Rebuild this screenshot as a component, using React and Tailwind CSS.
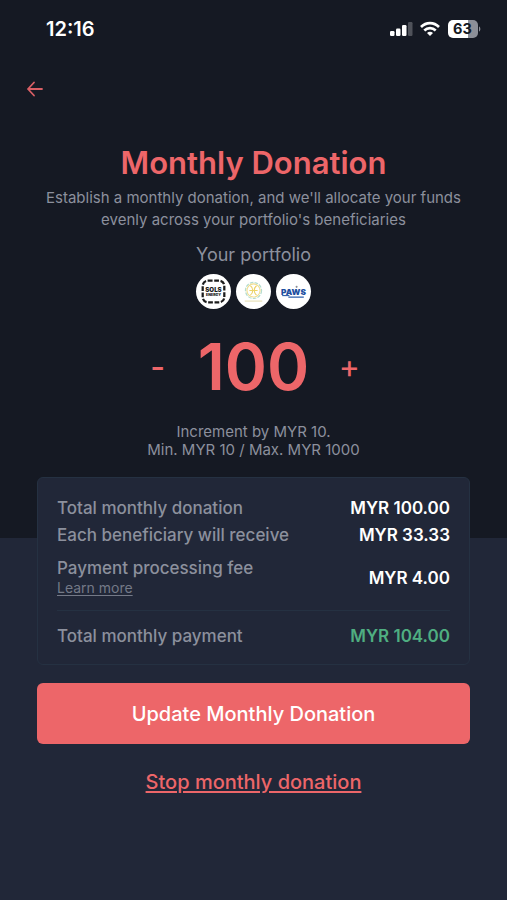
import { useState } from 'react'

const STEP = 10
const MIN = 10
const MAX = 1000
const FEE = 4

const beneficiaries = [
  { id: 'sols', name: 'SOLS Energy', Logo: SolsLogo },
  { id: 'sun', name: 'Sun Foundation', Logo: SunLogo },
  { id: 'paws', name: 'PAWS', Logo: PawsLogo },
]

const money = (value) => `MYR ${value.toFixed(2)}`

function SolsLogo() {
  return (
    <svg viewBox="0 0 34 34" className="size-full" aria-hidden="true">
      <rect x="6.5" y="6.5" width="21" height="21" rx="5" fill="none" stroke="#1c1c1c" strokeWidth="2.2" strokeDasharray="4.6 1.6" />
      <text x="17" y="17.5" textAnchor="middle" fontFamily="Inter, sans-serif" fontWeight="900" fontSize="6" fill="#1c1c1c">SOLS</text>
      <text x="17" y="21.5" textAnchor="middle" fontFamily="Inter, sans-serif" fontWeight="900" fontSize="3.5" fill="#1c1c1c">ENERGY</text>
    </svg>
  )
}

function SunLogo() {
  return (
    <svg viewBox="0 0 34 34" className="size-full" fill="none" aria-hidden="true">
      <circle cx="17" cy="16" r="7.8" stroke="#b4dccf" strokeWidth="1.2" strokeDasharray="3.5 1.2" />
      <circle cx="17" cy="16" r="6.4" stroke="#f0dc8c" strokeWidth="1" />
      <path d="M14 11.5c3 2 3 7 0 9M20 11.5c-3 2-3 7 0 9M13 16h8" stroke="#edd368" strokeWidth="1.1" />
      <path d="M8.5 26.3h17" stroke="#e3dcae" strokeWidth="1" />
    </svg>
  )
}

function PawsLogo() {
  return (
    <svg viewBox="0 0 34 34" className="size-full" aria-hidden="true">
      <text x="17" y="20" textAnchor="middle" fontFamily="Inter, sans-serif" fontWeight="900" fontSize="8" fill="#1e4f9f">PAWS</text>
      <circle cx="20" cy="12.5" r="1" fill="#8a8f98" />
      <path d="M6 21h7" stroke="#1e4f9f" strokeWidth="1" />
      <path d="M12 22.5h15" stroke="#5f86c0" strokeWidth="1.6" />
    </svg>
  )
}

function StatusBar() {
  return (
    <div className="flex items-center justify-between pl-[46px] pr-[26px] pt-[17px] text-white">
      <span className="text-xl leading-6 font-semibold">12:16</span>
      <div className="flex items-center gap-[7px]">
        <svg width="23" height="16" viewBox="0 0 23 16" fill="currentColor" aria-hidden="true">
          <rect x="0" y="10" width="4.5" height="5" rx="1.2" />
          <rect x="6" y="7.5" width="4.5" height="7.5" rx="1.2" />
          <rect x="12" y="4" width="4.5" height="11" rx="1.2" />
          <rect x="18" y="1" width="4.5" height="14" rx="1.2" opacity="0.25" />
        </svg>
        <svg width="20" height="16" viewBox="0 0 20 16" fill="none" stroke="currentColor" strokeWidth="2.6" aria-hidden="true">
          <path d="M1 6C6 .8 14 .8 19 6" />
          <path d="M4.3 9.5c3.2-3.2 8.2-3.2 11.4 0" />
          <path d="M10 15l-3-3.1c1.8-1.6 4.2-1.6 6 0z" fill="currentColor" stroke="none" />
        </svg>
        <svg width="34" height="20" viewBox="0 0 34 20" aria-label="Battery 63%">
          <path d="M6 1h15v18H6a5 5 0 0 1-5-5V6a5 5 0 0 1 5-5z" fill="#fff" />
          <path d="M21 1h5a5 5 0 0 1 5 5v8a5 5 0 0 1-5 5h-5z" fill="#8c8f98" />
          <path d="M32 7.5c1.8.6 1.8 4.400 0 5z" fill="#8c8f98" />
          <text x="15.5" y="15.4" textAnchor="middle" fontFamily="Inter, sans-serif" fontWeight="700" fontSize="14.5" fill="#151923">63</text>
        </svg>
      </div>
    </div>
  )
}

function Row({ label, value, valueClass = 'text-white', children }) {
  return (
    <div className="flex items-center justify-between">
      <dt className="font-medium text-[#8c909d]">
        {label}
        {children}
      </dt>
      <dd className={`font-semibold ${valueClass}`}>{value}</dd>
    </div>
  )
}

export default function App() {
  const [amount, setAmount] = useState(100)

  const change = (delta) => setAmount((a) => Math.min(MAX, Math.max(MIN, a + delta)))

  return (
    <div className="min-h-screen bg-[#212738] font-['Inter',sans-serif]">
      <header className="bg-[#151923] pb-[79px] text-center text-[#8c909d]">
        <StatusBar />

        <div className="flex px-6 pt-[37px]">
          <button type="button" aria-label="Back" className="p-0.5 text-[#d95f65]">
            <svg width="18" height="18" viewBox="0 0 18 18" fill="none" stroke="currentColor" strokeWidth="1.8" strokeLinecap="round" strokeLinejoin="round" aria-hidden="true">
              <path d="M16 9H2M8 2.500L2 9l6 6.500" />
            </svg>
          </button>
        </div>

        <h1 className="mt-[43px] text-[31px] leading-10 font-semibold text-[#ed6669]">Monthly Donation</h1>
        <p className="mx-auto mt-1 max-w-[420px] text-[15px] leading-[22px]">
          Establish a monthly donation, and we'll allocate your funds evenly across your portfolio's beneficiaries
        </p>

        <h2 className="mt-3 text-lg leading-6">Your portfolio</h2>
        <ul className="mt-[7px] flex justify-center gap-[5px]">
          {beneficiaries.map(({ id, name, Logo }) => (
            <li key={id} title={name} className="size-[35px] rounded-full bg-white">
              <Logo />
            </li>
          ))}
        </ul>

        <div className="mt-[26px] flex items-center justify-center gap-7 text-[#ed6669]">
          <button type="button" aria-label="Decrease" onClick={() => change(-STEP)} className="w-6 text-[32px] leading-8 font-medium">-</button>
          <output className="text-[64px] leading-[64px] font-semibold">{amount}</output>
          <button type="button" aria-label="Increase" onClick={() => change(STEP)} className="w-6 text-[32px] leading-8">+</button>
        </div>

        <p className="mt-6 text-[15px] leading-[18px]">
          Increment by MYR {STEP}.
          <br />
          Min. MYR {MIN} / Max. MYR {MAX}
        </p>
      </header>

      <main className="-mt-[61px] px-[37px] pb-10">
        <dl className="rounded-md border border-[#253142] bg-[#212738] px-[19px] pt-[17px] pb-[14px] text-[17px] leading-[27px]">
          <Row label="Total monthly donation" value={money(amount)} />
          <Row label="Each beneficiary will receive" value={money(Math.floor((amount * 100) / beneficiaries.length) / 100)} />
          <div className="mt-[9px] border-b border-[#253142] pb-3 leading-5">
            <Row label="Payment processing fee" value={money(FEE)}>
              <a href="#fees" className="block text-sm leading-5 font-normal text-[#747987] underline underline-offset-2">Learn more</a>
            </Row>
          </div>
          <div className="pt-3">
            <Row label="Total monthly payment" value={money(amount + FEE)} valueClass="text-[#4fae81]" />
          </div>
        </dl>

        <button type="button" className="mt-[18px] w-full rounded-md bg-[#ed6669] pt-[18px] pb-4 text-xl leading-[27px] font-medium text-white">
          Update Monthly Donation
        </button>
        <div className="mt-6 text-center">
          <a href="#stop" className="text-xl leading-7 font-medium text-[#ed6669] underline underline-offset-2">Stop monthly donation</a>
        </div>
      </main>
    </div>
  )
}
